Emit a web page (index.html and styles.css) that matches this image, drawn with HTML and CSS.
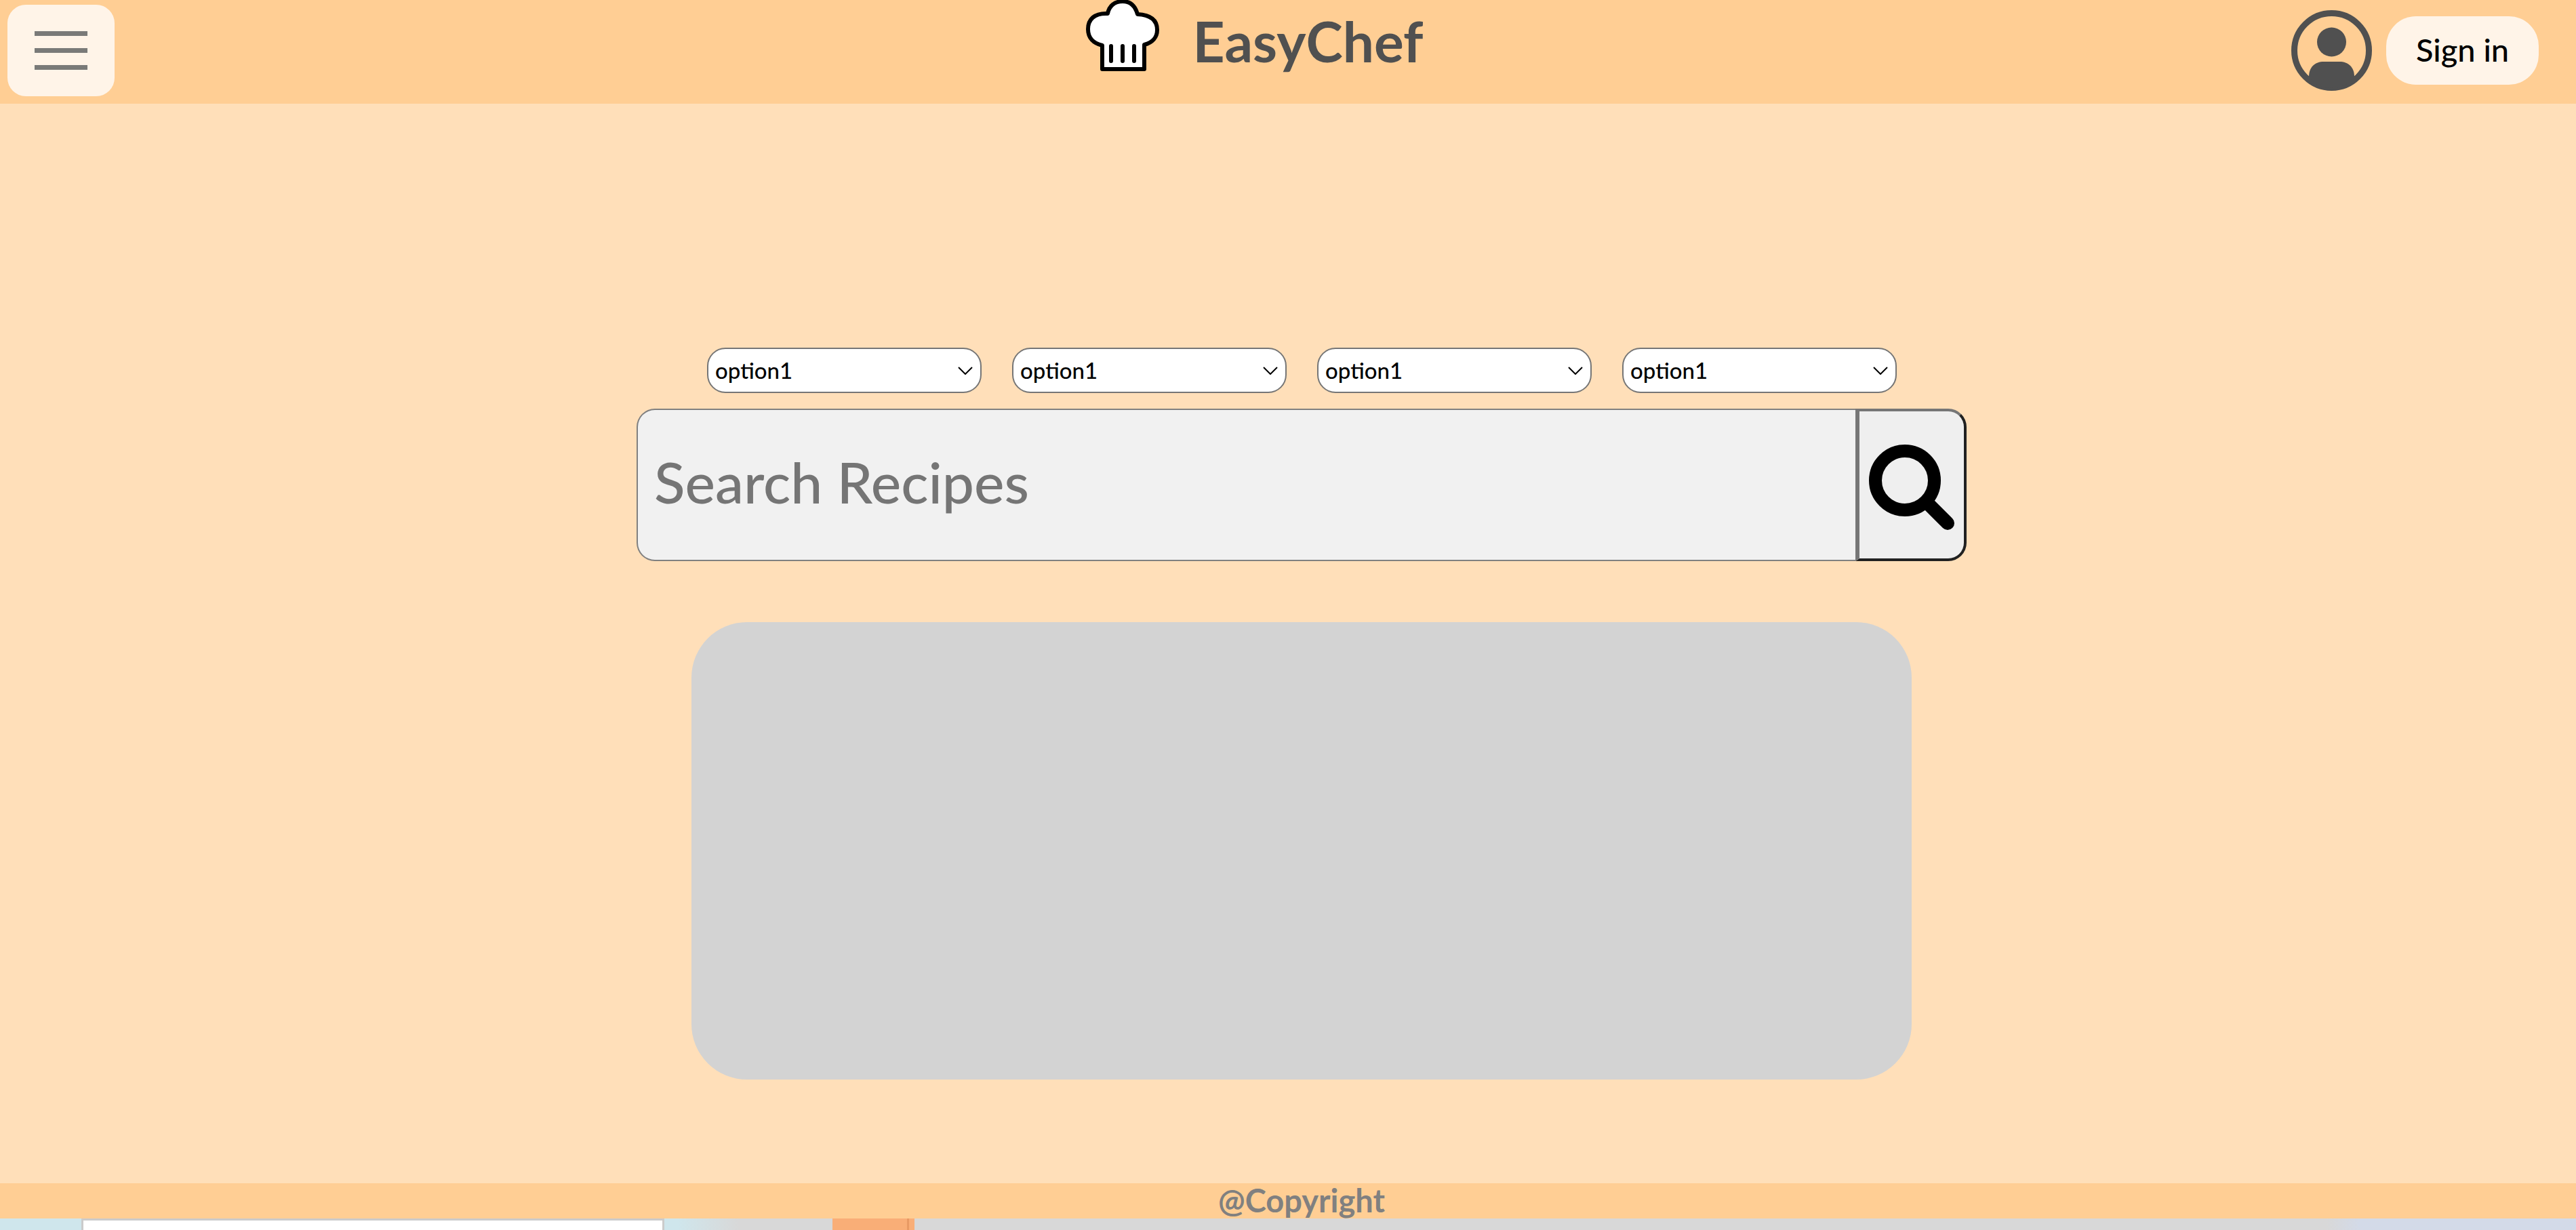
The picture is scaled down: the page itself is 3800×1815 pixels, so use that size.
FILE: index.html
```html
<!DOCTYPE html>
<html lang="en">
<head>
<meta charset="utf-8">
<title>EasyChef</title>
<link rel="stylesheet" href="styles.css">
</head>
<body>
<header class="topbar">
  <div class="side">
    <button class="menu" type="button" aria-label="Open menu"><span class="bar"></span><span class="bar"></span><span class="bar"></span></button>
  </div>
  <a class="brand" href="#">
    <svg class="hat" viewBox="0 0 108 105" aria-hidden="true">
      <g fill="#fff" stroke="#000" stroke-width="6" stroke-linejoin="round" stroke-linecap="round">
        <path d="M24 102V67C11 64 3 56 3 43C3 29 12 19 32 20C34 9 42 2 54 2C66 2 73 10 76 21C96 22 105 30 105 44C105 55 98 63 86 66V102Z"/>
        <path d="M37 68V90M54 68V90M71 68V90"/>
      </g>
    </svg>
    <h1 class="name">EasyChef</h1>
  </a>
  <div class="side account">
    <svg class="avatar" viewBox="0 0 119 119" aria-hidden="true">
      <circle cx="59.500" cy="59.500" r="55" fill="none" stroke="#505050" stroke-width="9"/>
      <circle cx="59.500" cy="47" r="21.500" fill="#505050"/>
      <path fill="#505050" d="M26 98C26 84 35 76 48 76H71C84 76 93 84 93 98C84 110 72 115 59.500 115S35 110 26 98Z"/>
    </svg>
    <button class="signin" type="button">Sign in</button>
  </div>
</header>
<main class="content">
  <form class="search" role="search">
    <div class="filters">
      <select class="filter" aria-label="Filter 1"><option>option1</option></select>
      <select class="filter" aria-label="Filter 2"><option>option1</option></select>
      <select class="filter" aria-label="Filter 3"><option>option1</option></select>
      <select class="filter" aria-label="Filter 4"><option>option1</option></select>
    </div>
    <div class="searchbar">
      <input class="query" type="text" placeholder="Search Recipes" aria-label="Search Recipes">
      <button class="go" type="button" aria-label="Search">
        <svg class="lens" viewBox="0 0 128 128" aria-hidden="true">
          <circle cx="54" cy="53" r="43.500" fill="none" stroke="#000" stroke-width="19"/>
          <path d="M86 85L117 116" stroke="#000" stroke-width="20" stroke-linecap="round"/>
        </svg>
      </button>
    </div>
  </form>
  <section class="results" aria-label="Results"></section>
</main>
<footer class="footer"><p class="copy">@Copyright</p></footer>
<div class="backdrop" aria-hidden="true"><div class="sky"></div><div class="sheet"></div><div class="fade"></div><div class="tab"></div><div class="wall"></div></div>
</body>
</html>
```
FILE: styles.css
```css
* { box-sizing: border-box; }
body {
  margin: 0;
  min-height: 100vh;
  display: flex;
  flex-direction: column;
  background: #ffdfb9;
  font-family: Lato, "Open Sans", sans-serif;
}
button, input, select { font: inherit; margin: 0; }

.topbar {
  display: flex;
  align-items: flex-start;
  height: 153px;
  background: #ffce94;
}
.side { flex: 1; display: flex; padding: 7px 11px; }
.menu {
  width: 158px;
  height: 135px;
  padding: 0;
  border: 0;
  border-radius: 27px;
  background: #fff4e8;
  display: flex;
  flex-direction: column;
  align-items: center;
  justify-content: center;
  gap: 18px;
}
.bar { width: 78px; height: 7px; background: #7a7a78; }
.brand {
  display: flex;
  gap: 50px;
  padding-right: 66px;
  color: #505050;
  text-decoration: none;
}
.hat { width: 108px; height: 105px; }
.name { margin: 0; font-size: 82px; line-height: 120px; font-weight: 700; }
.account {
  height: 149px;
  padding: 0 55px 0 0;
  align-items: center;
  justify-content: flex-end;
  gap: 21px;
}
.avatar { width: 119px; height: 119px; }
.signin {
  width: 225px;
  height: 101px;
  padding: 0 0 4px;
  border: 0;
  border-radius: 44px;
  background: #fff4e8;
  color: #000;
  font-size: 47px;
  font-weight: 500;
}

.content {
  flex: 1;
  display: flex;
  flex-direction: column;
  align-items: center;
  gap: 90px;
  padding: 360px 0 0 40px;
}
.search { width: 1962px; max-width: 100%; }
.filters { display: flex; gap: 45px; padding: 0 103px 0 104px; }
.filter {
  flex: 1;
  min-width: 0;
  height: 67px;
  padding: 0 10px 2px;
  border: 2px solid #767676;
  border-radius: 27px;
  color: #000;
  font-size: 33px;
  font-weight: 500;
  appearance: none;
  background: #fff url("data:image/svg+xml,%3Csvg xmlns='http://www.w3.org/2000/svg' width='22' height='12'%3E%3Cpath d='M1 1L11 11L21 1' fill='none' stroke='%23000' stroke-width='2'/%3E%3C/svg%3E") no-repeat right 11px center;
}
.searchbar { display: flex; height: 225px; margin-top: 23px; }
.query {
  flex: 1;
  min-width: 0;
  padding: 0 24px 10px;
  border: 2px solid #808080;
  border-right: 0;
  border-radius: 27px 0 0 27px;
  background: #f1f1f1;
  font-size: 84px;
  font-weight: 500;
}
.query::placeholder { color: #757575; opacity: 1; }
.go {
  width: 164px;
  padding: 8px 0 0;
  border: 4px solid;
  border-color: #767676 #212121 #212121 #767676;
  border-left-width: 6px;
  border-radius: 0 27px 27px 0;
  background: #efefef;
  display: flex;
  align-items: center;
  justify-content: center;
}
.lens { width: 128px; height: 128px; }
.results {
  width: 1800px;
  max-width: 100%;
  height: 675px;
  border-radius: 82px;
  background: #d3d3d3;
}

.footer {
  height: 52px;
  padding-left: 40px;
  background: #ffce94;
  text-align: center;
}
.copy { margin: 0; color: #808080; font-size: 47px; line-height: 50px; font-weight: 700; }

.backdrop { display: flex; height: 17px; background: #d8d8d8; }
.sky { width: 120px; background: #cfe6ec; }
.sheet { width: 860px; border: 3px solid #cbcbcb; border-bottom: 0; background: #fff; }
.fade { width: 248px; background: linear-gradient(90deg, #cfe6ec 0 20px, #d8d8d8 110px); }
.tab { width: 121px; background: linear-gradient(90deg, #f9ae77 0 110px, #e89a64 110px 113px, #f9ae77 113px); }
.wall { flex: 1; background: linear-gradient(90deg, #d8d8d8 0 85%, #d3dae8 87%); }
```
